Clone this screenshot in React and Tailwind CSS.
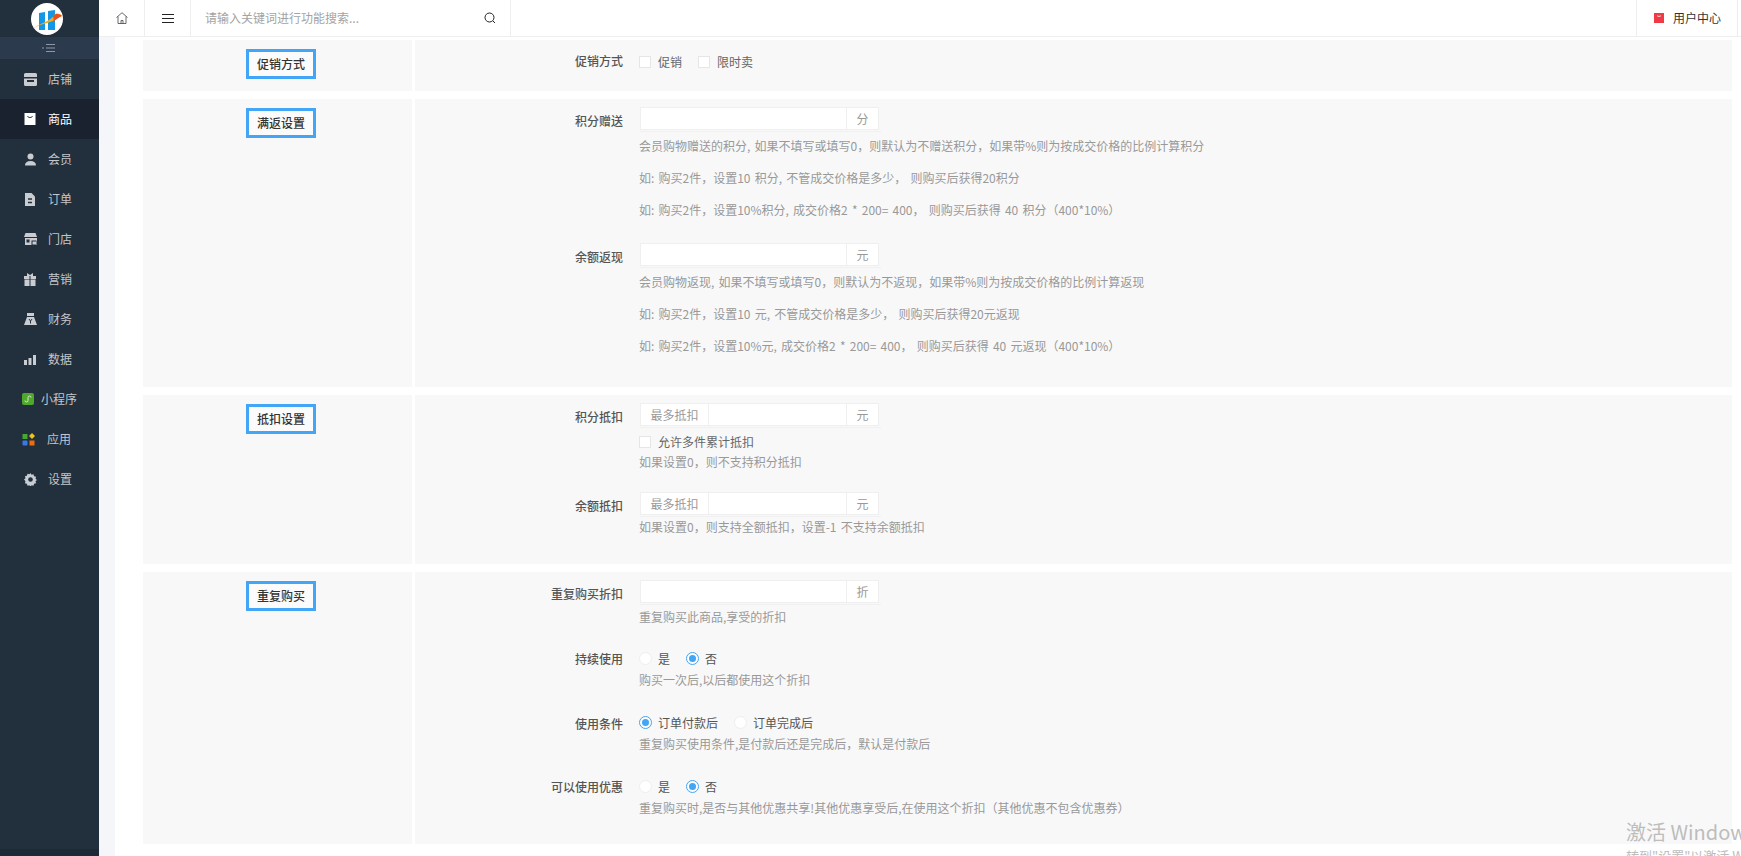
const font = { fontFamily: '"Noto Sans CJK SC", "Noto Sans", sans-serif' }

function Logo() {
  return (
    <svg width="34" height="34" viewBox="0 0 34 34">
      <circle cx="17" cy="17" r="16" fill="#fff" />
      <path d="M9 11l6-1v18H9z M18 9l7-1v20h-7z" fill="#1296e8" />
      <path d="M2 27C10 21 20 20 25 12c3-1 6 0 7 2-4 1-6 4-12 6-6 2-12 3-18 7z" fill="#f7a81b" />
      <path d="M23 14c3-3 7-2 9 0-3 1-5 3-8 5z" fill="#e8501c" />
    </svg>
  )
}

const icons = {
  store: (
    <svg width="13" height="13" viewBox="0 0 13 13" fill="#c9ccd1">
      <path d="M1.500 0h10a1.500 1.500 0 0 1 1.500 1.500V4H0V1.500A1.500 1.500 0 0 1 1.500 0z" />
      <path d="M0 5.500h13v6a1.500 1.500 0 0 1-1.500 1.500h-10A1.500 1.500 0 0 1 0 11.500z M3 7v2h7V7z" fillRule="evenodd" />
    </svg>
  ),
  bag: (
    <svg width="12" height="12" viewBox="0 0 12 12">
      <path d="M0.500 0h11v12H0.500z" fill="#fff" />
      <path d="M3.500 3c.5 2 4.500 2 5 0" fill="none" stroke="#1a222f" strokeWidth="1" />
    </svg>
  ),
  user: (
    <svg width="13" height="13" viewBox="0 0 13 13" fill="#c9ccd1">
      <circle cx="6.500" cy="3.500" r="3" />
      <path d="M1 12.500c0-3 2-4.500 5.500-4.500s5.500 1.500 5.500 4.500z" />
    </svg>
  ),
  file: (
    <svg width="12" height="13" viewBox="0 0 12 13">
      <path d="M1 0h6.500L11 3.500V13H1z" fill="#c9ccd1" />
      <path d="M4 6h4M4 9.500h4" stroke="#222f3d" strokeWidth="1.300" />
    </svg>
  ),
  shop: (
    <svg width="14" height="12" viewBox="0 0 14 12">
      <path d="M1.500 0h10L13 4H0z" fill="#c9ccd1" />
      <path d="M1 5h12v7H1z" fill="#c9ccd1" />
      <path d="M2.500 6.500h3v3h-3z" fill="#222f3d" />
      <path d="M7.500 7.500h5v4.500h-5z" fill="#222f3d" />
      <path d="M8.500 8.500h3.500v3H8.500z" fill="#c9ccd1" />
    </svg>
  ),
  gift: (
    <svg width="12" height="13" viewBox="0 0 12 13" fill="#c9ccd1">
      <path d="M3 0l3 2 3-2v3H3z" />
      <path d="M0 3h5.500v3H0z M6.500 3H12v3H6.500z M0.500 6.500h5V13h-5z M6.500 6.500h5V13h-5z" />
    </svg>
  ),
  money: (
    <svg width="13" height="12" viewBox="0 0 13 12">
      <path d="M3 0h7v3H3z" fill="#c9ccd1" />
      <path d="M3 4h7l3 8H0z" fill="#c9ccd1" />
      <path d="M5 6l1.500 2L8 6M6.500 8v2.500" stroke="#222f3d" strokeWidth="1" fill="none" />
    </svg>
  ),
  chart: (
    <svg width="12" height="11" viewBox="0 0 12 11" fill="#c9ccd1">
      <path d="M0 6h3v5H0z M4.500 4h3v7h-3z M9 1h3v10H9z" />
    </svg>
  ),
  mini: (
    <svg width="12" height="12" viewBox="0 0 12 12">
      <rect width="12" height="12" rx="2" fill="#4fa82c" />
      <path d="M3 7.500a1.500 1.500 0 1 0 3 0v-3a1.500 1.500 0 1 1 3 0" fill="none" stroke="#d7efcb" strokeWidth="1" />
    </svg>
  ),
  apps: (
    <svg width="13" height="13" viewBox="0 0 13 13">
      <rect x="0.500" y="1" width="5" height="5" fill="#46a82e" />
      <path d="M10 0l3 3-3 3-3-3z" fill="#f2c21a" />
      <rect x="0.500" y="7.500" width="5" height="5" rx="1" fill="#3b78e7" />
      <rect x="7.500" y="7.500" width="5" height="5" fill="#ee6c0c" />
    </svg>
  ),
  gear: (
    <svg width="13" height="13" viewBox="0 0 13 13">
      <path d="M6.500 0l1 1.800 2-.6.600 2 2 .6-.6 2 1.500 1.200-1.500 1.200.6 2-2 .6-.6 2-2-.6-1 1.800-1-1.800-2 .6-.6-2-2-.6.6-2L0 6.500 1.500 5.300l-.6-2 2-.6.600-2 2 .6z" fill="#c9ccd1" />
      <circle cx="6.500" cy="6.500" r="2.300" fill="#222f3d" />
    </svg>
  ),
}

const menu = [
  { icon: 'store', label: '店铺' },
  { icon: 'bag', label: '商品', active: true },
  { icon: 'user', label: '会员' },
  { icon: 'file', label: '订单' },
  { icon: 'shop', label: '门店' },
  { icon: 'gift', label: '营销' },
  { icon: 'money', label: '财务' },
  { icon: 'chart', label: '数据' },
  { icon: 'mini', label: '小程序', tight: true },
  { icon: 'apps', label: '应用', tight: true },
  { icon: 'gear', label: '设置' },
]

function Sidebar() {
  return (
    <div className="w-[99px] shrink-0 bg-[#222f3d] flex flex-col">
      <div className="h-[37px] flex justify-center items-center shrink-0 pr-[5px]">
        <Logo />
      </div>
      <div className="h-[22px] bg-[#2b3b4d] flex justify-center items-center shrink-0 pr-[2px]">
        <svg width="13" height="8" viewBox="0 0 13 8" stroke="#8d98a5" strokeWidth="1">
          <path d="M4 0.500h9M4 4h9M4 7.500h9M0 4h2" />
        </svg>
      </div>
      {menu.map(m => (
        <div key={m.label} className={`h-[40px] flex items-center text-xs ${m.active ? 'bg-[#1a222f] text-white' : 'text-[#c3c6cb]'} ${m.tight ? 'pl-[22px]' : 'pl-[24px]'}`}>
          <span className={`${m.label === '小程序' ? 'w-[19px]' : m.tight ? 'w-[25px]' : 'w-[24px]'} flex`}>{icons[m.icon]}</span>
          <span>{m.label}</span>
        </div>
      ))}
      <div className="mt-auto h-[7px] bg-[#1e2936]" />
    </div>
  )
}

function Header() {
  return (
    <div className="h-[37px] shrink-0 bg-white border-b border-[#eeeeee] flex items-stretch text-xs">
      <div className="w-[46px] border-r border-[#eeeeee] flex justify-center items-center">
        <svg width="12" height="12" viewBox="0 0 12 12" fill="none" stroke="#444" strokeWidth="0.800">
          <path d="M0.500 5.500L6 0.700l5.500 4.800M2 4.500v7h8v-7M5 11.500V8.500h2v3" />
        </svg>
      </div>
      <div className="w-[46px] border-r border-[#eeeeee] flex justify-center items-center">
        <svg width="12" height="9" viewBox="0 0 12 9" stroke="#222" strokeWidth="1">
          <path d="M0 0.500h12M0 4.500h12M0 8.500h12" />
        </svg>
      </div>
      <div className="w-[320px] border-r border-[#eeeeee] flex items-center justify-between pl-[14px] pr-[14px]">
        <span className="text-[#a3a3a3]">请输入关键词进行功能搜索...</span>
        <svg width="12" height="12" viewBox="0 0 12 12" fill="none" stroke="#222" strokeWidth="1">
          <circle cx="5.500" cy="5.500" r="4.500" />
          <path d="M9 9l2 2" />
        </svg>
      </div>
      <div className="flex-1" />
      <div className="w-[102px] border-l border-r border-[#eeeeee] mr-[3px] flex items-center pl-[17px] gap-[9px] text-[#333]">
        <svg width="10" height="10" viewBox="0 0 10 10">
          <path d="M0 0h10v10H0z" fill="#f03a45" />
          <path d="M3 2.500c.5 1.200 3.500 1.200 4 0" fill="none" stroke="#fff" strokeWidth="0.800" />
        </svg>
        <span>用户中心</span>
      </div>
    </div>
  )
}

function Check({ label, className = '' }) {
  return (
    <label className={`flex items-center ${className}`}>
      <span className="w-[12px] h-[12px] bg-white border border-[#e6e6e6] mr-[7px]" />
      <span className="text-[#666]">{label}</span>
    </label>
  )
}

function Radio({ label, on, className = '' }) {
  return (
    <label className={`flex items-center ${className}`}>
      <span className={`w-[13px] h-[13px] rounded-full mr-[6px] flex items-center justify-center bg-white ${on ? 'border-[1.5px] border-[#42a5f5]' : 'border border-[#eeeeee]'}`}>
        {on && <span className="w-[7px] h-[7px] rounded-full bg-[#42a5f5]" />}
      </span>
      <span className="text-[#555]">{label}</span>
    </label>
  )
}

function Addon({ prefix, suffix }) {
  return (
    <div className="w-[241px] ml-[1px] pb-[1px] border-b border-[#f1f1f1]">
      <div className="w-[239px] h-[23px] flex bg-white border border-[#efefef] text-[#999]">
        {prefix && <div className="w-[68px] border-r border-[#efefef] flex items-center justify-center">{prefix}</div>}
        <div className="flex-1" />
        <div className="w-[32px] border-l border-[#efefef] flex items-center justify-center">{suffix}</div>
      </div>
    </div>
  )
}

function Help({ children, className = '' }) {
  return <div className={`text-[#999] leading-[20px] h-[20px] whitespace-nowrap [word-spacing:1.5px] ${className}`}>{children}</div>
}

function Field({ label, top = 'pt-[2px]', className = '', children }) {
  return (
    <div className={`flex ${className}`}>
      <div className={`w-[208px] shrink-0 text-right text-[#555] font-medium leading-[23px] mr-[16px] ${top}`}>{label}</div>
      <div className="flex-1 min-w-0">{children}</div>
    </div>
  )
}

function Section({ title, height, children }) {
  return (
    <div className={`grid grid-cols-[269px_1fr] gap-x-[3px] ${height}`}>
      <div className="bg-[#f8f8f8] flex justify-center items-start pt-[9px] pl-[7px]">
        <div className="w-[70px] h-[30px] border-[3px] border-[#42a5f5] flex items-center justify-center font-medium text-[#333] bg-[#fbfbfb]">{title}</div>
      </div>
      <div className="bg-[#f8f8f8] pt-[8px]">{children}</div>
    </div>
  )
}

export default function App() {
  return (
    <div className="h-screen overflow-hidden flex relative text-xs" style={font}>
      <Sidebar />
      <div className="flex-1 min-w-0 flex flex-col">
        <Header />
        <div className="flex-1 bg-[#f4f6fa] pl-[16px] min-h-0">
          <div className="h-full bg-white pl-[28px] pr-[9px] pt-[3px] flex flex-col gap-[8px]">
            <Section title="促销方式" height="h-[51px]">
              <Field label="促销方式" top="pt-[1px]">
                <div className="flex h-[23px] mt-[2px]">
                  <Check label="促销" className="w-[59px]" />
                  <Check label="限时卖" />
                </div>
              </Field>
            </Section>

            <Section title="满返设置" height="h-[288px]">
              <Field label="积分赠送" className="mb-[23px]">
                <Addon suffix="分" />
                <Help className="mt-[4px] mb-[12px]">会员购物赠送的积分, 如果不填写或填写0，则默认为不赠送积分，如果带%则为按成交价格的比例计算积分</Help>
                <Help className="mb-[12px]">如: 购买2件，设置10 积分, 不管成交价格是多少， 则购买后获得20积分</Help>
                <Help>如: 购买2件，设置10%积分, 成交价格2 * 200= 400， 则购买后获得 40 积分（400*10%）</Help>
              </Field>
              <Field label="余额返现">
                <Addon suffix="元" />
                <Help className="mt-[4px] mb-[12px]">会员购物返现, 如果不填写或填写0，则默认为不返现，如果带%则为按成交价格的比例计算返现</Help>
                <Help className="mb-[12px]">如: 购买2件，设置10 元, 不管成交价格是多少， 则购买后获得20元返现</Help>
                <Help>如: 购买2件，设置10%元, 成交价格2 * 200= 400， 则购买后获得 40 元返现（400*10%）</Help>
              </Field>
            </Section>

            <Section title="抵扣设置" height="h-[169px]">
              <Field label="积分抵扣" className="mb-[20px]">
                <Addon prefix="最多抵扣" suffix="元" />
                <div className="h-[20px] mt-[4px] flex">
                  <Check label="允许多件累计抵扣" />
                </div>
                <Help>如果设置0，则不支持积分抵扣</Help>
              </Field>
              <Field label="余额抵扣">
                <Addon prefix="最多抵扣" suffix="元" />
                <Help>如果设置0，则支持全额抵扣，设置-1 不支持余额抵扣</Help>
              </Field>
            </Section>

            <Section title="重复购买" height="h-[272px]">
              <Field label="重复购买折扣" className="mb-[20px]">
                <Addon suffix="折" />
                <Help className="mt-[2px]">重复购买此商品,享受的折扣</Help>
              </Field>
              <Field label="持续使用" top="" className="mb-[21px]">
                <div className="flex h-[23px]">
                  <Radio label="是" className="w-[47px]" />
                  <Radio on label="否" />
                </div>
                <Help>购买一次后,以后都使用这个折扣</Help>
              </Field>
              <Field label="使用条件" top="pt-[1px]" className="mb-[21px]">
                <div className="flex h-[23px]">
                  <Radio on label="订单付款后" className="w-[95px]" />
                  <Radio label="订单完成后" />
                </div>
                <Help>重复购买使用条件,是付款后还是完成后，默认是付款后</Help>
              </Field>
              <Field label="可以使用优惠" top="">
                <div className="flex h-[23px]">
                  <Radio label="是" className="w-[47px]" />
                  <Radio on label="否" />
                </div>
                <Help>重复购买时,是否与其他优惠共享!其他优惠享受后,在使用这个折扣（其他优惠不包含优惠券）</Help>
              </Field>
            </Section>
          </div>
        </div>
      </div>

      {/* 系统水印，压在页面右下角 */}
      <div className="absolute left-[1626px] top-[818px] whitespace-nowrap text-[#bdbdbd] pointer-events-none">
        <div className="text-[20px] leading-[28px]">激活 Windows</div>
        <div className="text-[13px] leading-[20px]">转到"设置"以激活 Windows。</div>
      </div>
    </div>
  )
}
